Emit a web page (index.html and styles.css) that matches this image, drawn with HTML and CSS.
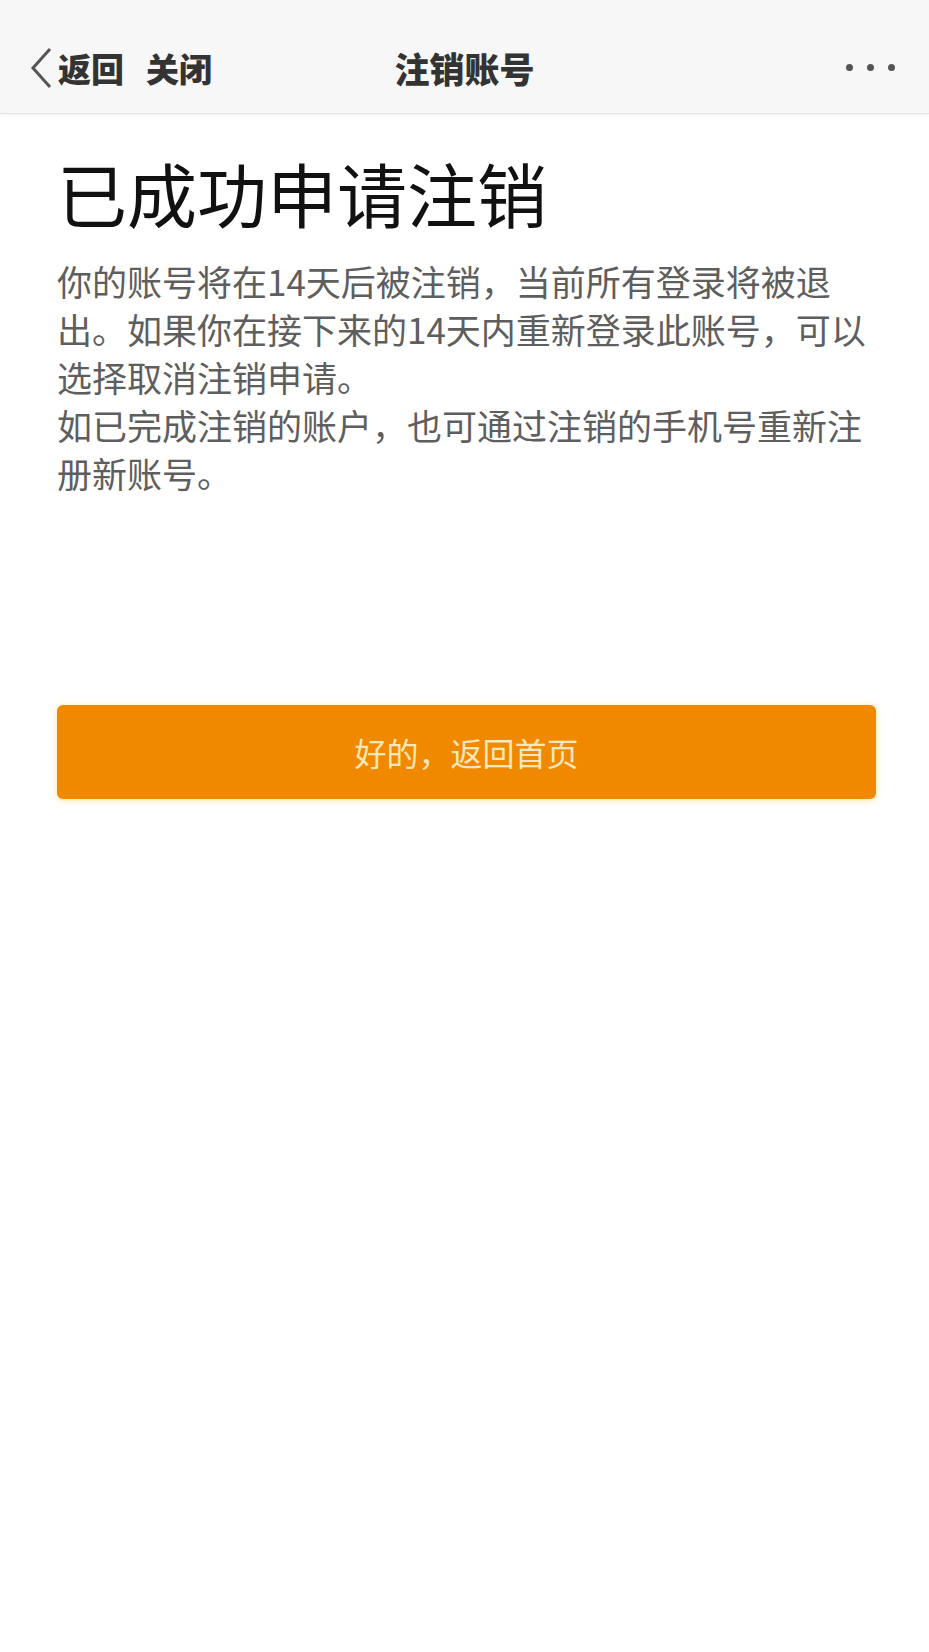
FILE: index.html
```html
<!DOCTYPE html>
<html lang="zh-CN">
<head>
<meta charset="utf-8">
<title>注销账号</title>
<link rel="stylesheet" href="styles.css">
</head>
<body>
<header class="navbar">
  <div class="nav-left">
    <svg class="chevron" viewBox="0 0 22 42" width="22" height="42"><polyline points="20,2 3,21 20,40" fill="none" stroke="#555" stroke-width="3" stroke-linejoin="miter"/></svg>
    <span class="nav-link back">返回</span>
    <span class="nav-link">关闭</span>
  </div>
  <div class="nav-title">注销账号</div>
  <div class="nav-right">
    <span class="dot"></span><span class="dot"></span><span class="dot"></span>
  </div>
</header>
<main class="content">
  <h1 class="title">已成功申请注销</h1>
  <p class="desc">你的账号将在14天后被注销，当前所有登录将被退出。如果你在接下来的14天内重新登录此账号，可以选择取消注销申请。<br>如已完成注销的账户，也可通过注销的手机号重新注册新账号。</p>
  <button class="primary-btn">好的，返回首页</button>
</main>
</body>
</html>
```
FILE: styles.css
```css
html, body {
  margin: 0;
  padding: 0;
  background: #ffffff;
}
body {
  font-family: "Noto Sans CJK SC", "Noto Sans", sans-serif;
  width: 929px;
  min-height: 1652px;
}
.navbar {
  box-sizing: border-box;
  height: 114px;
  padding-top: 22px;
  background: #f7f7f7;
  border-bottom: 1px solid #e4e4e4;
  box-shadow: 0 1px 3px rgba(0,0,0,0.06);
  display: grid;
  grid-template-columns: 1fr auto 1fr;
  align-items: center;
}
.nav-left {
  display: flex;
  align-items: center;
  padding-left: 30px;
}
.chevron {
  display: block;
  margin-right: 6px;
}
.nav-link {
  font-size: 33px;
  font-weight: 900;
  color: #333;
  line-height: 40px;
}
.nav-link.back {
  margin-right: 22px;
}
.nav-title {
  font-size: 35px;
  font-weight: 900;
  color: #333;
  line-height: 40px;
}
.nav-right {
  display: flex;
  justify-content: flex-end;
  align-items: center;
  gap: 14px;
  padding-right: 34px;
}
.dot {
  width: 7px;
  height: 7px;
  border-radius: 50%;
  background: #555;
}
.content {
  padding: 0 53px 0 57px;
}
.title {
  margin: 37px 0 0;
  font-size: 70px;
  line-height: 84px;
  font-weight: 400;
  color: #111;
}
.desc {
  margin: 22px 0 0;
  font-size: 35px;
  line-height: 48px;
  color: #5e5e5e;
}
.primary-btn {
  display: block;
  width: 100%;
  height: 94px;
  margin-top: 208px;
  border: none;
  border-radius: 6px;
  background: #f18900;
  color: #f8e7b8;
  font-family: "Noto Sans CJK SC", "Noto Sans", sans-serif;
  font-size: 32px;
  box-shadow: 0 1px 6px rgba(255, 200, 60, 0.55);
}
```
